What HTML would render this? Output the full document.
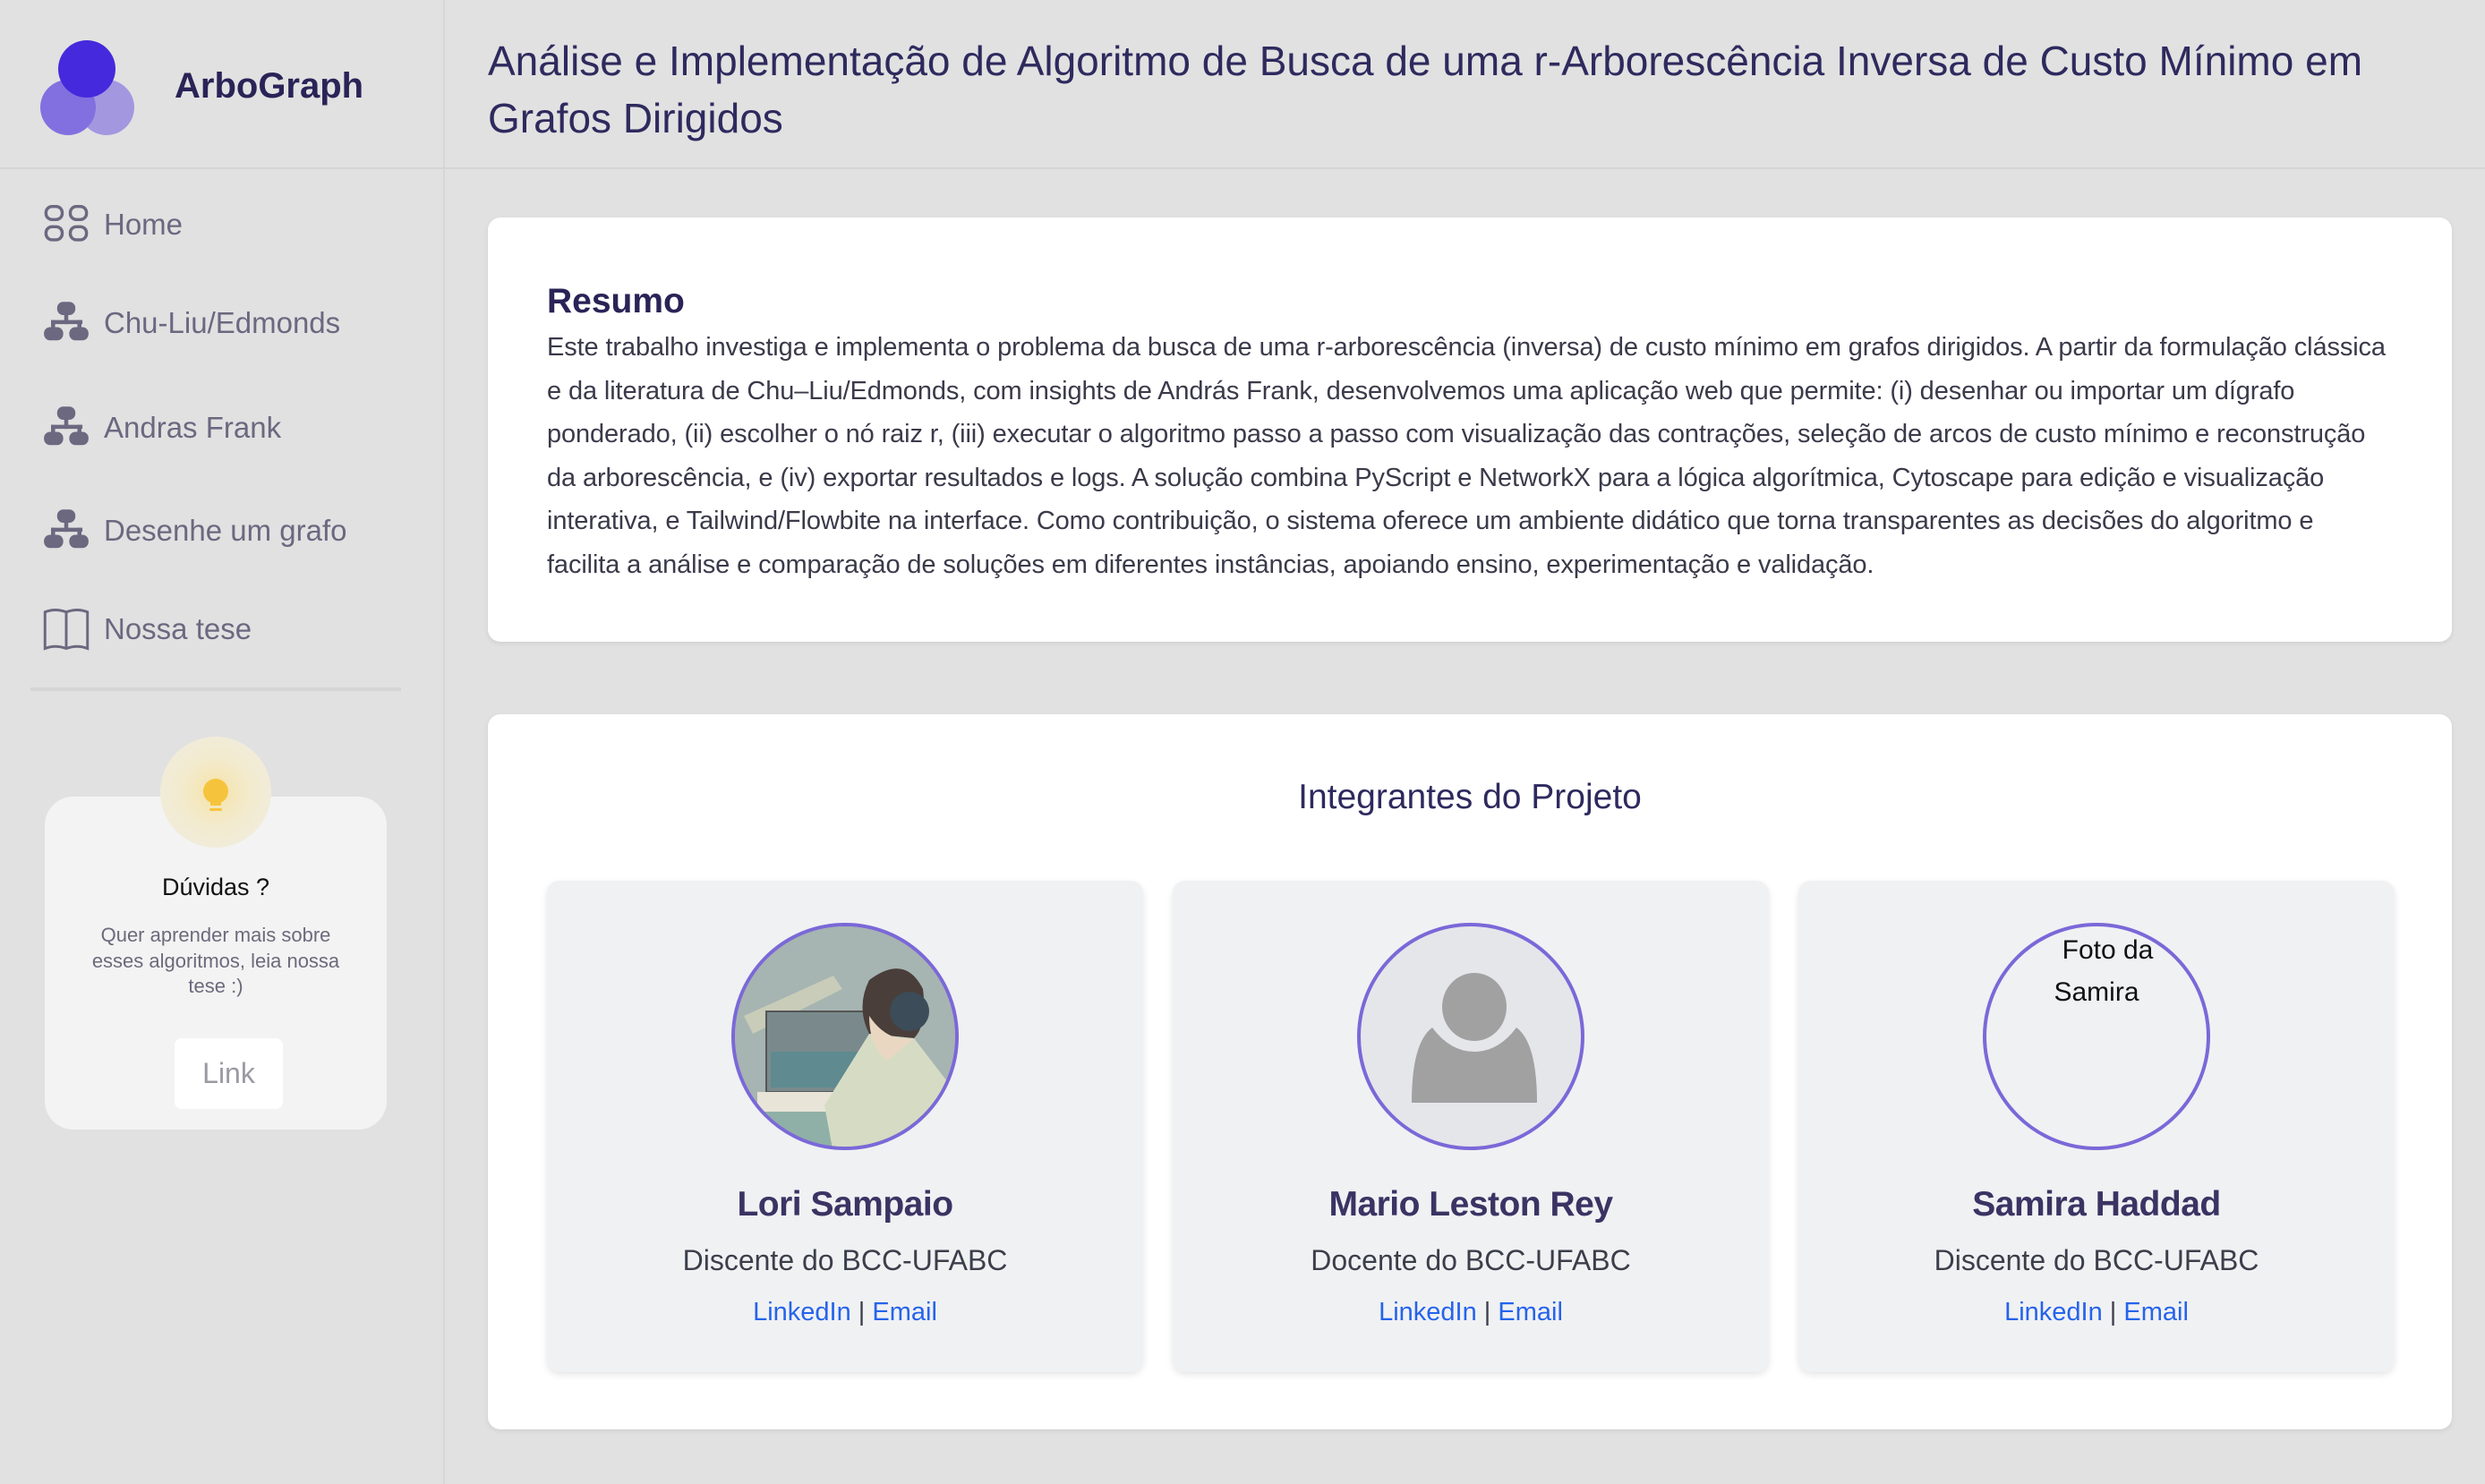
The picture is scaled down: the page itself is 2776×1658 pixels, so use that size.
<!DOCTYPE html>
<html><head><meta charset="utf-8">
<style>
*{margin:0;padding:0;box-sizing:border-box}
html,body{width:2776px;height:1658px;overflow:hidden;background:#e1e1e1;font-family:"Liberation Sans",sans-serif}
.side{position:absolute;left:0;top:0;width:497px;height:1658px;background:#e1e1e1;border-right:2px solid #d6d6d6}
.hdr{position:absolute;left:0;top:0;width:2776px;height:189px;border-bottom:2px solid #d5d5d5}
.brand{position:absolute;left:195px;top:74px;font-size:40px;font-weight:bold;color:#2a2357}
.title{position:absolute;left:545px;top:36px;font-size:46px;line-height:64px;color:#2e2a5e}
.nav{position:absolute;left:48px;font-size:33px;color:#6b6880;height:56px;display:flex;align-items:center}
.nav svg{width:52px;height:52px;margin-right:16px}
.div{position:absolute;left:34px;top:768px;width:414px;height:4px;background:#d5d5d5}
.help{position:absolute;left:50px;top:890px;width:382px;height:372px;background:#f3f3f3;border-radius:32px;text-align:center}
.glow{position:absolute;left:179px;top:823px;width:124px;height:124px;border-radius:50%;background:radial-gradient(circle,#f6e3a8 0%,#f3ebcf 45%,#eeece4 100%)}
.card{position:absolute;left:545px;width:2194px;background:#fff;border-radius:14px;box-shadow:0 2px 6px rgba(0,0,0,.08)}
.p{font-size:29px;line-height:48.6px;color:#3a3a4a;white-space:nowrap;letter-spacing:-0.12px}
.mem{position:absolute;top:984px;width:666px;height:549px;background:#f0f1f3;border-radius:14px;box-shadow:0 3px 8px rgba(0,0,0,.1);text-align:center}
.av{position:absolute;left:206px;top:47px;width:254px;height:254px;border-radius:50%;border:4px solid #7b68d8;overflow:hidden}
.nm{position:absolute;left:0;width:100%;top:340px;font-size:39px;font-weight:bold;color:#3b3363;letter-spacing:-0.5px}
.rl{position:absolute;left:0;width:100%;top:406px;font-size:32px;color:#3a3f4a}
.lk{position:absolute;left:0;width:100%;top:466px;font-size:29px;color:#3a3f4a}
.lk span{color:#2563eb}
</style></head><body>
<div class="side"></div>
<div class="hdr"></div>
<svg style="position:absolute;left:40px;top:40px" width="120" height="120"><circle cx="79" cy="80" r="31" fill="#a397e0"/><circle cx="36" cy="80" r="31" fill="#8270e0"/><circle cx="57" cy="37" r="32" fill="#4529dc"/></svg>
<div class="brand">ArboGraph</div>
<div class="title">Análise e Implementação de Algoritmo de Busca de uma r-Arborescência Inversa de Custo Mínimo em<br>Grafos Dirigidos</div>

<div class="nav" style="top:223px"><svg viewBox="0 0 46 46" fill="none" stroke="#6b6880" stroke-width="3"><rect x="3" y="5" width="16" height="13" rx="6"/><rect x="27" y="5" width="16" height="13" rx="6"/><rect x="3" y="25" width="16" height="13" rx="6"/><rect x="27" y="25" width="16" height="13" rx="6"/></svg>Home</div>
<div class="nav" style="top:333px"><svg viewBox="0 0 46 46" fill="#6b6880"><rect x="14" y="2" width="18" height="13" rx="6"/><rect x="21" y="14" width="4" height="10"/><rect x="8" y="20" width="31" height="4"/><rect x="8" y="20" width="4" height="8"/><rect x="34" y="20" width="4" height="8"/><rect x="1" y="27" width="19" height="13" rx="6"/><rect x="26" y="27" width="19" height="13" rx="6"/></svg>Chu-Liu/Edmonds</div>
<div class="nav" style="top:450px"><svg viewBox="0 0 46 46" fill="#6b6880"><rect x="14" y="2" width="18" height="13" rx="6"/><rect x="21" y="14" width="4" height="10"/><rect x="8" y="20" width="31" height="4"/><rect x="8" y="20" width="4" height="8"/><rect x="34" y="20" width="4" height="8"/><rect x="1" y="27" width="19" height="13" rx="6"/><rect x="26" y="27" width="19" height="13" rx="6"/></svg>Andras Frank</div>
<div class="nav" style="top:565px"><svg viewBox="0 0 46 46" fill="#6b6880"><rect x="14" y="2" width="18" height="13" rx="6"/><rect x="21" y="14" width="4" height="10"/><rect x="8" y="20" width="31" height="4"/><rect x="8" y="20" width="4" height="8"/><rect x="34" y="20" width="4" height="8"/><rect x="1" y="27" width="19" height="13" rx="6"/><rect x="26" y="27" width="19" height="13" rx="6"/></svg>Desenhe um grafo</div>
<div class="nav" style="top:675px"><svg viewBox="0 0 46 46" fill="none" stroke="#6b6880" stroke-width="2.6"><path d="M2 6 L2 42 Q12 38 23 42 Q34 38 44 42 L44 6 Q34 2 23 6 Q12 2 2 6 Z M23 6 L23 42"/></svg>Nossa tese</div>
<div class="div"></div>

<div class="help">
<div style="position:absolute;top:86px;width:100%;font-size:27px;color:#111">Dúvidas ?</div>
<div style="position:absolute;top:141px;width:100%;font-size:22px;line-height:28.5px;color:#6c6a7c">Quer aprender mais sobre<br>esses algoritmos, leia nossa<br>tese :)</div>
<div style="position:absolute;left:145px;top:270px;width:121px;height:79px;background:#fff;border-radius:8px;font-size:32px;color:#9a9aa3;line-height:79px">Link</div>
</div>
<div class="glow"></div>
<svg style="position:absolute;left:224px;top:870px" width="34" height="40"><circle cx="17" cy="14" r="14" fill="#f6c43c"/><rect x="11" y="22" width="12" height="8" fill="#f6c43c"/><rect x="10" y="33" width="14" height="3" rx="1.5" fill="#f6c43c"/></svg>

<div class="card" style="top:243px;height:474px">
<div style="position:absolute;left:66px;top:72px;font-size:39px;font-weight:bold;color:#2a2357">Resumo</div>
<div class="p" style="position:absolute;left:66px;top:121px">
Este trabalho investiga e implementa o problema da busca de uma r-arborescência (inversa) de custo mínimo em grafos dirigidos. A partir da formulação clássica<br>
e da literatura de Chu–Liu/Edmonds, com insights de András Frank, desenvolvemos uma aplicação web que permite: (i) desenhar ou importar um dígrafo<br>
ponderado, (ii) escolher o nó raiz r, (iii) executar o algoritmo passo a passo com visualização das contrações, seleção de arcos de custo mínimo e reconstrução<br>
da arborescência, e (iv) exportar resultados e logs. A solução combina PyScript e NetworkX para a lógica algorítmica, Cytoscape para edição e visualização<br>
interativa, e Tailwind/Flowbite na interface. Como contribuição, o sistema oferece um ambiente didático que torna transparentes as decisões do algoritmo e<br>
facilita a análise e comparação de soluções em diferentes instâncias, apoiando ensino, experimentação e validação.</div>
</div>

<div class="card" style="top:798px;height:799px">
<div style="position:absolute;left:0;width:100%;top:71px;text-align:center;font-size:39px;color:#2e2a5e">Integrantes do Projeto</div>
</div>

<div class="mem" style="left:611px">
<div class="av" style="background:#a7b5b3">
<svg width="254" height="254" viewBox="0 0 254 254">
<rect x="0" y="0" width="254" height="254" fill="#a6b4b2"/>
<path d="M10 100 L110 55 L120 70 L20 120Z" fill="#c8ccb8"/>
<rect x="35" y="95" width="120" height="90" fill="#7a8a8c" stroke="#555" stroke-width="2"/>
<rect x="40" y="140" width="110" height="40" fill="#5e8a90"/>
<rect x="0" y="200" width="254" height="60" fill="#8fb0a6"/>
<rect x="25" y="185" width="120" height="22" fill="#e8e4d8"/>
<path d="M150 60 Q190 30 210 70 Q215 110 200 125 L150 120 Q135 90 150 60Z" fill="#4a3e3a"/>
<circle cx="195" cy="95" r="22" fill="#3c4c58"/>
<path d="M150 120 L200 125 L250 190 L250 254 L110 254 L100 200 Z" fill="#d6dcc4"/>
<path d="M150 100 Q170 130 200 125 L170 150 Q150 135 150 100Z" fill="#ead7c2"/>
</svg></div>
<div class="nm">Lori Sampaio</div>
<div class="rl">Discente do BCC-UFABC</div>
<div class="lk"><span>LinkedIn</span> | <span>Email</span></div>
</div>

<div class="mem" style="left:1310px">
<div class="av" style="background:#e5e6ea">
<svg width="254" height="254" viewBox="0 0 254 254"><ellipse cx="127" cy="90" rx="36" ry="38" fill="#a1a1a1"/><path d="M57 197 Q57 130 80 113 Q100 140 127 140 Q154 140 174 113 Q197 130 197 197Z" fill="#a1a1a1"/></svg>
</div>
<div class="nm">Mario Leston Rey</div>
<div class="rl">Docente do BCC-UFABC</div>
<div class="lk"><span>LinkedIn</span> | <span>Email</span></div>
</div>

<div class="mem" style="left:2009px">
<div class="av" style="background:#f0f1f3">
<div style="position:absolute;left:0;width:100%;top:3px;font-size:30px;line-height:47px;color:#111;text-align:center">&nbsp;&nbsp;&nbsp;Foto da<br>Samira</div>
</div>
<div class="nm">Samira Haddad</div>
<div class="rl">Discente do BCC-UFABC</div>
<div class="lk"><span>LinkedIn</span> | <span>Email</span></div>
</div>
</body></html>
